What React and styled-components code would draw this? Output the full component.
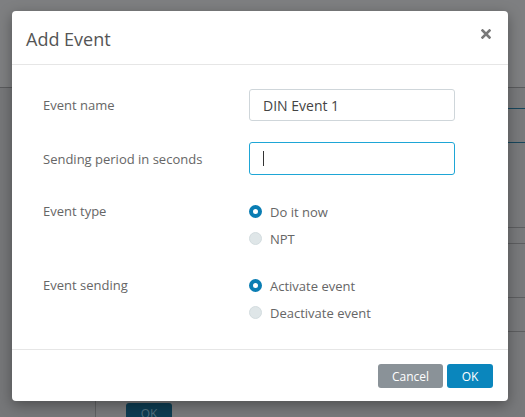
import React from "react";
import styled, { createGlobalStyle } from "styled-components";

const GlobalStyle = createGlobalStyle`
  html, body {
    margin: 0;
    padding: 0;
  }

  body {
    width: 525px;
    height: 417px;
    overflow: hidden;
    font-family: "Open Sans", "Noto Sans", sans-serif;
    background: #7c7d7f;
  }
`;

const Page = styled.div`
  position: relative;
  width: 525px;
  height: 417px;
  background: #7c7d7f;
  overflow: hidden;
`;

const TopBand = styled.div`
  height: 87px;
  border-bottom: 1px solid #5a5b5d;
  background: #7e7f81;
`;

const Content = styled.div`
  display: flex;
  height: 329px;
`;

const Sidebar = styled.div`
  width: 95px;
  border-right: 1px solid #5f6062;
  background: #767779;
`;

const Main = styled.div`
  flex: 1;
  display: flex;
  flex-direction: column;
  padding-left: 30px;
  background: #78797b;
`;

const BgLine = styled.div`
  height: ${(p) => p.$h}px;
  border-bottom: 1px solid ${(p) => (p.$blue ? "#17465c" : "#5d5e60")};
`;

const BgButton = styled.div`
  margin-top: auto;
  width: 46px;
  height: 14px;
  overflow: hidden;
  border-radius: 3px 3px 0 0;
  background: #0d3c51;
  color: #4f6f7e;
  font-size: 12px;
  line-height: 22px;
  text-align: center;
`;

const Modal = styled.div`
  position: absolute;
  left: 12px;
  top: 11px;
  width: 496px;
  height: 390px;
  background: #fff;
  border-radius: 4px;
  box-shadow: 0 4px 14px rgba(0, 0, 0, 0.35);
  display: flex;
  flex-direction: column;
`;

const Header = styled.div`
  height: 54px;
  box-sizing: border-box;
  padding: 0 17px 0 14px;
  border-bottom: 1px solid #e6e6e6;
  display: flex;
  align-items: center;
  justify-content: space-between;
`;

const Title = styled.h4`
  margin: 0;
  font-size: 18px;
  font-weight: 400;
  color: #555;
  padding-top: 2px;
`;

const CloseBtn = styled.span`
  display: flex;
  margin-top: -7px;
  cursor: pointer;
`;

const Body = styled.div`
  flex: 1;
  padding: 24px 31px 0;
  display: flex;
  flex-direction: column;
  gap: 21px;
  border-bottom: 1px solid #e6e6e6;
`;

const Row = styled.div`
  display: grid;
  grid-template-columns: 206px 206px;
  align-items: ${(p) => (p.$top ? "start" : "center")};
  margin-top: ${(p) => p.$mt || 0}px;
`;

const Label = styled.div`
  font-size: 13px;
  color: #666;
  line-height: ${(p) => (p.$top ? "27px" : "normal")};
`;

const FieldWrap = styled.div`
  position: relative;
`;

const Input = styled.input`
  display: block;
  box-sizing: border-box;
  width: 206px;
  height: ${(p) => (p.$focus ? 33 : 32)}px;
  padding: 0 13px;
  border: 1px solid ${(p) => (p.$focus ? "#1ea6d6" : "#cfd6da")};
  border-radius: 3px;
  font-family: inherit;
  font-size: 14px;
  color: #444;
  outline: none;
  background: #fff;
`;

const Caret = styled.span`
  position: absolute;
  left: 14px;
  top: 9px;
  width: 1px;
  height: 15px;
  background: #333;
`;

const RadioGroup = styled.div`
  display: flex;
  flex-direction: column;
`;

const RadioItem = styled.label`
  display: flex;
  align-items: center;
  gap: 8px;
  height: 27px;
  font-size: 13px;
  color: #666;
`;

const Dot = styled.span`
  box-sizing: border-box;
  width: 13px;
  height: 13px;
  border-radius: 50%;
  background: ${(p) => (p.$on ? "#fff" : "#dfe6e8")};
  border: ${(p) => (p.$on ? "4px solid #0a7db3" : "1px solid #d3dcdf")};
`;

const Footer = styled.div`
  height: 51px;
  display: flex;
  justify-content: flex-end;
  align-items: center;
  gap: 4px;
  padding: 0 15px 0 0;
`;

const Button = styled.button`
  height: 24px;
  padding: 0;
  width: ${(p) => p.$w}px;
  border: none;
  border-radius: 3px;
  background: ${(p) => (p.$primary ? "#0a86bd" : "#8a9298")};
  color: #fff;
  font-family: inherit;
  font-size: 12px;
  margin-top: 1px;
`;

const Radio = ({ on, children }) => (
  <RadioItem>
    <Dot $on={on} />
    {children}
  </RadioItem>
);

const CloseIcon = () => (
  <svg width="10" height="10" viewBox="0 0 10 10">
    <path
      d="M1.5 1.5 L8.5 8.5 M8.5 1.5 L1.5 8.5"
      stroke="#7a7a7a"
      strokeWidth="2.6"
      strokeLinecap="square"
    />
  </svg>
);

const App = () => (
  <Page>
    <GlobalStyle />
    <TopBand />
    <Content>
      <Sidebar />
      <Main>
        <BgLine $h={20} $blue />
        <BgLine $h={33} $blue />
        <BgLine $h={84} />
        <BgLine $h={15} />
        <BgLine $h={53} />
        <BgLine $h={33} />
        <BgButton>OK</BgButton>
      </Main>
    </Content>

    <Modal>
      <Header>
        <Title>Add Event</Title>
        <CloseBtn>
          <CloseIcon />
        </CloseBtn>
      </Header>
      <Body>
        <Row>
          <Label>Event name</Label>
          <FieldWrap>
            <Input defaultValue="DIN Event 1" readOnly />
          </FieldWrap>
        </Row>
        <Row>
          <Label>Sending period in seconds</Label>
          <FieldWrap>
            <Input $focus readOnly />
            <Caret />
          </FieldWrap>
        </Row>
        <Row $top $mt={2}>
          <Label $top>Event type</Label>
          <RadioGroup>
            <Radio on>Do it now</Radio>
            <Radio>NPT</Radio>
          </RadioGroup>
        </Row>
        <Row $top $mt={-1}>
          <Label $top>Event sending</Label>
          <RadioGroup>
            <Radio on>Activate event</Radio>
            <Radio>Deactivate event</Radio>
          </RadioGroup>
        </Row>
      </Body>
      <Footer>
        <Button $w={65}>Cancel</Button>
        <Button $w={46} $primary>
          OK
        </Button>
      </Footer>
    </Modal>
  </Page>
);

export default App;
